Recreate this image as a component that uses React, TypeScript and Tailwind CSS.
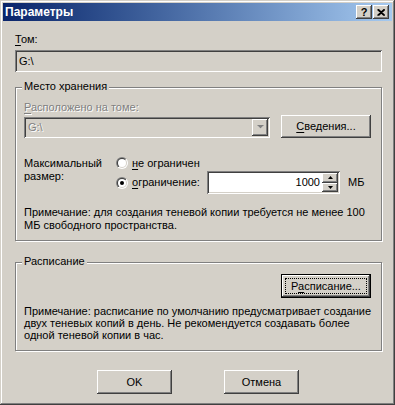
import React from "react"

const raised =
  "shadow-[inset_-1px_-1px_#404040,inset_1px_1px_#ffffff,inset_-2px_-2px_#808080,inset_2px_2px_#d4d0c8]"
const sunken =
  "shadow-[inset_1px_1px_#808080,inset_-1px_-1px_#ffffff,inset_2px_2px_#404040,inset_-2px_-2px_#d4d0c8]"
const disabledText = "text-[#808080] [text-shadow:1px_1px_#ffffff]"

function Radio({ checked }: { checked?: boolean }) {
  return (
    <svg width="12" height="12" viewBox="0 0 12 12" className="shrink-0">
      <defs>
        <linearGradient id="rOuter" x1="0" y1="0" x2="1" y2="1">
          <stop offset="50%" stopColor="#808080" />
          <stop offset="50%" stopColor="#ffffff" />
        </linearGradient>
        <linearGradient id="rInner" x1="0" y1="0" x2="1" y2="1">
          <stop offset="50%" stopColor="#404040" />
          <stop offset="50%" stopColor="#d4d0c8" />
        </linearGradient>
      </defs>
      <circle cx="6" cy="6" r="6" fill="url(#rOuter)" />
      <circle cx="6" cy="6" r="5" fill="url(#rInner)" />
      <circle cx="6" cy="6" r="4" fill="#ffffff" />
      {checked && <circle cx="6" cy="6" r="2" fill="#000000" />}
    </svg>
  )
}

function Group({ title, className, children }: { title: string; className: string; children: React.ReactNode }) {
  return (
    <div
      className={`relative border border-[#808080] shadow-[inset_1px_1px_#ffffff,1px_1px_#ffffff] ${className}`}
    >
      <span className="absolute left-[6px] top-[-8px] bg-[#d4d0c8] px-[2px] leading-[13px]">{title}</span>
      {children}
    </div>
  )
}

function Button({ children, className = "", isDefault = false }: { children: React.ReactNode; className?: string; isDefault?: boolean }) {
  if (isDefault) {
    return (
      <div className={`border border-black bg-[#d4d0c8] ${className}`}>
        <div className={`h-full w-full p-[3px] ${raised}`}>
          <div className="flex h-full w-full items-center justify-center border border-dotted border-black">
            {children}
          </div>
        </div>
      </div>
    )
  }
  return <div className={`flex items-center justify-center bg-[#d4d0c8] ${raised} ${className}`}>{children}</div>
}

export default function App() {
  return (
    <div
      className="relative h-[405px] w-[395px] bg-[#d4d0c8] px-[3px] pt-[3px] font-['Tahoma','Liberation_Sans',sans-serif] text-[11px] leading-[13px] text-black shadow-[inset_-1px_-1px_#404040,inset_1px_1px_#d4d0c8,inset_-2px_-2px_#808080,inset_2px_2px_#ffffff]"
    >
      {/* Title bar */}
      <div className="flex h-[18px] items-center bg-gradient-to-r from-[#0a246a] to-[#a6caf0] pl-[2px] pr-[3px]">
        <span className="text-[12px] font-bold text-white">Параметры</span>
        <div className="ml-auto flex gap-[1px]">
          <div className={`flex h-[14px] w-[16px] items-center justify-center bg-[#d4d0c8] ${raised}`}>
            <span className="text-[11px] font-bold leading-[11px]">?</span>
          </div>
          <div className={`flex h-[14px] w-[16px] items-center justify-center bg-[#d4d0c8] ${raised}`}>
            <svg width="8" height="7" viewBox="0 0 8 7">
              <path d="M0.5 0.5 L7 6.5 M1.5 0.5 L8 6.5 M7 0.5 L0.5 6.5 M8 0.5 L1.5 6.5" stroke="#000" strokeWidth="1.2" />
            </svg>
          </div>
        </div>
      </div>

      <div className="pl-[12px] pr-[10px]">
        {/* Volume */}
        <div className="mt-[12px] h-[13px]">
          <span className="underline underline-offset-2">Т</span>ом:
        </div>
        <div className={`mt-[4px] flex h-[22px] items-center bg-[#d4d0c8] pl-[4px] ${sunken}`}>G:\</div>

        {/* Storage */}
        <Group title="Место хранения" className="mt-[15px] h-[154px] pl-[8px] pr-[10px]">
          <div className={`mt-[13px] h-[13px] ${disabledText}`}>
            <span className="underline underline-offset-2">Р</span>асположено на томе:
          </div>
          <div className="mt-[1px] flex items-start">
            <div className={`mt-[2px] flex h-[21px] w-[246px] items-center bg-[#d4d0c8] pl-[4px] pr-[2px] ${sunken}`}>
              <span className={disabledText}>G:\</span>
              <div className={`ml-auto flex h-[17px] w-[16px] items-center justify-center ${raised}`}>
                <svg width="7" height="5" viewBox="0 0 7 5">
                  <path d="M1 1 H6 L3.5 3.5 Z" fill="#ffffff" />
                  <path d="M0 0 H7 L3.5 3.5 Z" fill="#808080" />
                </svg>
              </div>
            </div>
            <Button className="ml-[11px] h-[23px] w-[90px]">
              <span>
                <span className="underline underline-offset-2">С</span>ведения...
              </span>
            </Button>
          </div>

          <div className="mt-[17px] flex">
            <div className="mt-[2px] w-[92px]">
              Максимальный
              <br />
              размер:
            </div>
            <div className="flex flex-col">
              <div className="flex h-[16px] items-center">
                <Radio />
                <span className="ml-[4px]">
                  <span className="underline underline-offset-2">н</span>е ограничен
                </span>
              </div>
              <div className="flex h-[23px] items-center">
                <div className="flex w-[91px] items-center">
                  <Radio checked />
                  <span className="ml-[4px]">
                    <span className="underline underline-offset-2">о</span>граничение:
                  </span>
                </div>
                <div className={`flex h-[23px] w-[133px] items-center bg-white p-[2px] ${sunken}`}>
                  <span className="ml-auto pr-[2px]">1000</span>
                  <div className="flex h-full w-[16px] flex-col">
                    <div className={`flex h-1/2 items-center justify-center bg-[#d4d0c8] ${raised}`}>
                      <svg width="5" height="3" viewBox="0 0 5 3">
                        <path d="M2.5 0 L5 3 H0 Z" fill="#000" />
                      </svg>
                    </div>
                    <div className={`flex h-1/2 items-center justify-center bg-[#d4d0c8] ${raised}`}>
                      <svg width="5" height="3" viewBox="0 0 5 3">
                        <path d="M0 0 H5 L2.5 3 Z" fill="#000" />
                      </svg>
                    </div>
                  </div>
                </div>
                <span className="ml-[8px]">МБ</span>
              </div>
            </div>
          </div>

          <p className="mt-[12px] whitespace-nowrap">
            Примечание: для создания теневой копии требуется не менее 100
            <br />
            МБ свободного пространства.
          </p>
        </Group>

        {/* Schedule */}
        <Group title="Расписание" className="mt-[21px] h-[89px] pl-[8px] pr-[10px]">
          <div className="mt-[11px] flex justify-end">
            <Button isDefault className="h-[24px] w-[90px]">
              <span>
                Р<span className="underline underline-offset-2">а</span>списание...
              </span>
            </Button>
          </div>
          <p className="mt-[7px] whitespace-nowrap leading-[12px]">
            Примечание: расписание по умолчанию предусматривает создание
            <br />
            двух теневых копий в день. Не рекомендуется создавать более
            <br />
            одной теневой копии в час.
          </p>
        </Group>

        {/* Dialog buttons */}
        <div className="mt-[19px] flex">
          <Button className="ml-[82px] h-[24px] w-[75px]">OK</Button>
          <Button className="ml-[52px] h-[24px] w-[75px]">Отмена</Button>
        </div>
      </div>
    </div>
  )
}
